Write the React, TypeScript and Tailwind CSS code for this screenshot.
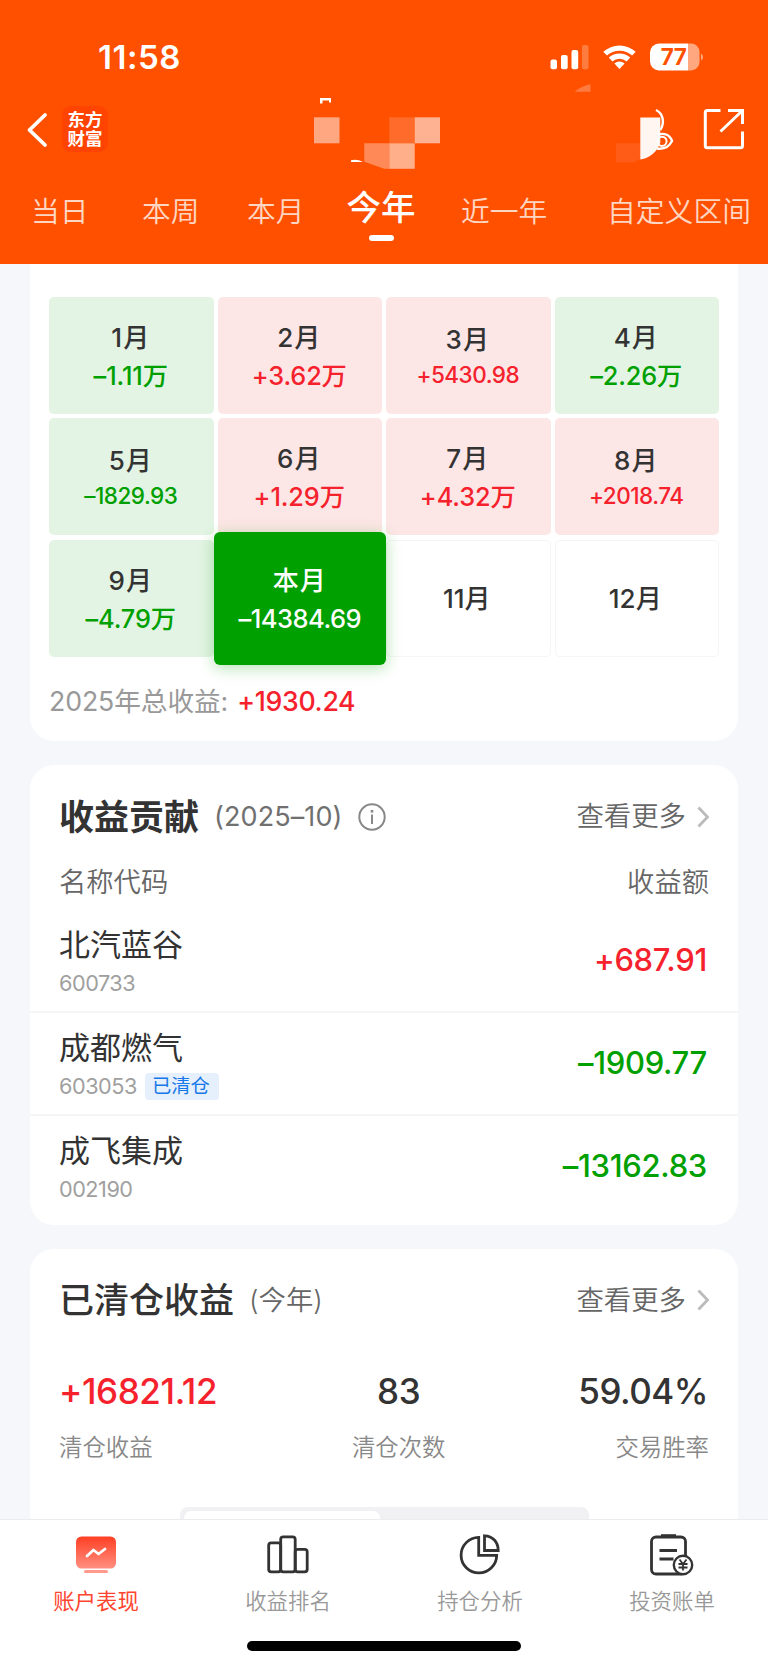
import React from 'react';

const tabs = [
  { label: '当日', className: 'ml-[31px] w-[58px]' },
  { label: '本周', className: 'ml-[53px] w-[58px]' },
  { label: '本月', className: 'ml-[47px] w-[58px]' },
  { label: '今年', className: 'ml-[41px] w-[70px]', active: true },
  { label: '近一年', className: 'ml-[45px] w-[87px]' },
  { label: '自定义区间', className: 'ml-[59px] w-[145px]' },
];

const months = [
  { name: '1月', value: '–1.11万', type: 'down' },
  { name: '2月', value: '+3.62万', type: 'up' },
  { name: '3月', value: '+5430.98', type: 'up', small: true },
  { name: '4月', value: '–2.26万', type: 'down' },
  { name: '5月', value: '–1829.93', type: 'down', small: true },
  { name: '6月', value: '+1.29万', type: 'up' },
  { name: '7月', value: '+4.32万', type: 'up' },
  { name: '8月', value: '+2018.74', type: 'up', small: true },
  { name: '9月', value: '–4.79万', type: 'down' },
  { name: '本月', value: '–14384.69', type: 'current' },
  { name: '11月', type: 'empty' },
  { name: '12月', type: 'empty' },
];

const stocks = [
  { name: '北汽蓝谷', code: '600733', value: '+687.91', up: true },
  { name: '成都燃气', code: '603053', value: '–1909.77', cleared: true },
  { name: '成飞集成', code: '002190', value: '–13162.83' },
];

const StatusBar = () => (
  <div className="h-[82px] flex pt-[41px] pl-[98px] pr-[64px] justify-between">
    <div className="h-8 text-[33px] leading-8 font-semibold tracking-[0.5px] text-white">11:58</div>
    <svg className="w-[156px] h-8" viewBox="548 41 156 32" fill="#fff">
      <rect x="550.5" y="59.5" width="6.5" height="9.8" rx="2" />
      <rect x="561" y="55" width="6.7" height="14.3" rx="2" />
      <rect x="571.5" y="50" width="6.7" height="19.3" rx="2" />
      <rect x="582" y="45" width="6.5" height="24.3" rx="2" opacity="0.25" />
      <path d="M603.3 51.8a24 24 0 0 1 32.4 0l-3.6 3.8a18.6 18.6 0 0 0-25.2 0z" />
      <path d="M608.8 57.6a16 16 0 0 1 21.4 0l-3.6 3.8a10.6 10.6 0 0 0-14.2 0z" />
      <path d="M614.4 63.4a8 8 0 0 1 10.2 0l-5.1 5.6z" />
      <path d="M659 43.5h29v27h-29a9 9 0 0 1-9-9v-9a9 9 0 0 1 9-9z" />
      <path d="M688 43.5h3a8.5 8.5 0 0 1 8.5 8.5v10a8.5 8.5 0 0 1-8.5 8.5h-3z" opacity="0.5" />
      <path d="M701 53.5a4 4 0 0 1 0 7z" opacity="0.5" />
      <text x="673.5" y="65.4" textAnchor="middle" fontSize="22.5" fontWeight="700" letterSpacing="-0.6" fill="#ff5000">77</text>
    </svg>
  </div>
);

const TitleBar = () => (
  <div className="h-[90px] flex">
    <svg className="w-[62px] h-[90px]" viewBox="0 82 62 90" fill="none" stroke="#fff" strokeWidth="3.8" strokeLinecap="round" strokeLinejoin="round">
      <path d="M45 115 29.5 130l15.500 15" />
    </svg>
    <div className="mt-6 w-[46px] h-[46px] rounded-[9px] bg-[#ff4300] text-white text-[17.5px] font-bold leading-[19px] text-center pt-1">
      东方
      <br />
      财富
    </div>
    {/* Blurred-out account name */}
    <svg className="ml-[202px] w-[135px] h-[90px]" viewBox="310 82 135 90">
      <path d="M320 98h11v4.500h-2v-2h-6.500v3h-2.500z" fill="#fff" />
      <rect x="314" y="117.3" width="25.5" height="26" fill="#ffa780" />
      <rect x="389.3" y="117.3" width="25.4" height="26" fill="#ff6b2b" />
      <rect x="414.7" y="117.3" width="25.3" height="26" fill="#ffb291" />
      <path d="M364.3 143.3h25v25.5h-5l-20-7z" fill="#ff8a57" />
      <rect x="389.3" y="143.3" width="25.4" height="25.5" fill="#ffaf8a" />
      <path d="M351 160.3q6-1.500 12 1.700h-12z" fill="#fff" />
    </svg>
    <svg className="ml-[125px] w-[178px] h-[90px]" viewBox="570 82 178 90" fill="none">
      <path d="M574.5 91.7q7-6 16-7.500v7.500z" fill="#ff7a40" />
      <path d="M616 143.3h25v15l-6 4h-19z" fill="#ff5c17" />
      <path d="M640.3 117.5h20v25c-3 9-10 15.500-20 17z" fill="#fff6f2" />
      <path d="M656 110c7 3.500 9 12 4.500 20" stroke="#fff" strokeWidth="2.4" />
      <path d="M658 134.5c7-2 12 1 14 6.500-3 6-8 8.500-15 7.500" stroke="#fff" strokeWidth="2.4" />
      <circle cx="662" cy="141.3" r="4.6" stroke="#fff" strokeWidth="2" />
      <path d="M720.5 110.5h-13.200a2 2 0 0 0-2 2v33.200a2 2 0 0 0 2 2h33.200a2 2 0 0 0 2-2V131.500M728 110.500h14.500V124M742 111l-21.500 20.500" stroke="#fff" strokeWidth="3" />
    </svg>
  </div>
);

const Tabs = () => (
  <div className="h-[92px] flex pt-5">
    {tabs.map((tab) =>
      tab.active ? (
        <div key={tab.label} className={`${tab.className} shrink-0 flex flex-col items-center`}>
          <span className="h-8 leading-8 text-[34.5px] font-medium text-white whitespace-nowrap">{tab.label}</span>
          <span className="mt-[11px] w-[25px] h-[6px] rounded-full bg-white" />
        </div>
      ) : (
        <div key={tab.label} className={`${tab.className} shrink-0 h-10 leading-10 text-[28.8px] font-[350] text-[#ffd6c2] whitespace-nowrap`}>
          {tab.label}
        </div>
      )
    )}
  </div>
);

const MonthCell = ({ month }: { month: (typeof months)[number] }) => {
  if (month.type === 'empty') {
    return (
      <div className="h-[117px] rounded-[5px] border border-[#f5f5f6] flex items-center justify-center pr-[3px] text-[26px] font-medium text-[#333]">
        <span>{month.name}</span>
      </div>
    );
  }

  if (month.type === 'current') {
    return (
      <div className="relative h-[117px]">
        <div className="absolute -inset-x-1 -inset-y-2 rounded-[6px] bg-[#00a000] text-white text-center pt-[33px] shadow-[0_3px_16px_rgba(0,160,0,0.3)]">
          <div className="h-8 leading-8 text-[26px] font-medium tracking-[1px]">{month.name}</div>
          <div className="mt-[6px] h-8 leading-8 text-[25.5px] font-medium tracking-[-0.5px]">{month.value}</div>
        </div>
      </div>
    );
  }

  const up = month.type === 'up';
  return (
    <div className={`h-[117px] rounded-[5px] pr-px text-center ${up ? 'bg-[#fde6e6]' : 'bg-[#e3f4e4]'} ${month.small ? 'pt-[27px]' : 'pt-[25px]'}`}>
      <div className="h-8 leading-8 text-[26px] font-medium tracking-[1px] text-[#333]">{month.name}</div>
      <div
        className={`h-8 leading-8 font-medium ${up ? 'text-[#f5222d]' : 'text-[#00a000]'} ${
          month.small ? 'mt-[3px] text-[22.5px] tracking-[-0.5px]' : 'mt-[6px] text-[25.3px] tracking-[-0.1px]'
        }`}
      >
        {month.value}
      </div>
    </div>
  );
};

const More = () => (
  <div className="flex items-center text-[27.4px] font-[350] text-[#666]">
    <span>查看更多</span>
    <svg className="ml-[9px] w-4 h-6" viewBox="0 0 16 24" fill="none" stroke="#bbb" strokeWidth="2.8">
      <path d="M3.5 2.5 12.5 12l-9 9.500" />
    </svg>
  </div>
);

const Contribution = () => (
  <section className="mt-6 h-[460px] rounded-[24px] bg-white">
    <div className="h-[104px] flex items-center justify-between pl-[29px] pr-[27px]">
      <div className="flex items-center">
        <h2 className="text-[35px] font-bold text-[#333]">收益贡献</h2>
        <span className="ml-[15px] text-[27px] tracking-[0.1px] text-[#707070]">(2025–10)</span>
        <svg className="ml-[15px] w-7 h-7" viewBox="0 0 28 28" fill="none" stroke="#888" strokeWidth="2">
          <circle cx="14" cy="14" r="12.7" />
          <path d="M14 11.5v9.500" />
          <path d="M14 7v2.600" strokeWidth="2.6" />
        </svg>
      </div>
      <More />
    </div>
    <div className="h-7 flex items-center justify-between px-[29px] text-[27.3px] font-[350] text-[#666]">
      <span>名称代码</span>
      <span>收益额</span>
    </div>
    {stocks.map((stock, index) => (
      <div
        key={stock.code}
        className={`flex justify-between pl-[29px] pr-[31px] ${index === 0 ? 'h-[114px] pt-8' : 'h-[103px] pt-[19px] border-t-2 border-[#f5f5f7]'}`}
      >
        <div>
          <div className="h-8 leading-8 text-[31px] text-[#333]">{stock.name}</div>
          <div className="mt-[9px] h-[27px] flex items-center">
            <span className="text-[21.7px] tracking-[-0.5px] text-[#a0a0a0]">{stock.code}</span>
            {stock.cleared && (
              <span className="ml-2 w-[74px] h-[27px] rounded-[4px] bg-[#e6f0fc] pr-[2px] text-center leading-[27px] text-[19.3px] text-[#1677e8]">
                已清仓
              </span>
            )}
          </div>
        </div>
        <div className={`mt-[15px] h-8 leading-8 text-[31px] font-medium tracking-[-0.3px] ${stock.up ? 'text-[#f5222d]' : 'text-[#00a000]'}`}>
          {stock.value}
        </div>
      </div>
    ))}
  </section>
);

const Cleared = () => (
  <section className="mt-6 h-[290px] rounded-t-[24px] bg-white">
    <div className="h-[103px] flex items-center justify-between pl-[29px] pr-[27px]">
      <div className="flex items-center">
        <h2 className="text-[35px] font-medium text-[#333]">已清仓收益</h2>
        <span className="ml-[15px] text-[27.4px] font-[350] text-[#666]">(今年)</span>
      </div>
      <More />
    </div>
    <div className="mt-[19px] flex justify-between pl-[29px] pr-[29px]">
      <div>
        <div className="h-10 leading-10 text-[35px] font-medium tracking-[-0.4px] text-[#f5222d]">+16821.12</div>
        <div className="mt-[21px] h-8 leading-8 text-[23.4px] font-[350] text-[#888]">清仓收益</div>
      </div>
      <div className="ml-[2px] text-center">
        <div className="h-10 leading-10 text-[35px] font-medium tracking-[-0.4px] text-[#333]">83</div>
        <div className="mt-[21px] h-8 leading-8 text-[23.4px] font-[350] text-[#888]">清仓次数</div>
      </div>
      <div className="text-right">
        <div className="h-10 leading-10 pr-px text-[35px] font-medium tracking-[-0.5px] text-[#333]">59.04%</div>
        <div className="mt-[21px] h-8 leading-8 text-[23.4px] font-[350] text-[#888]">交易胜率</div>
      </div>
    </div>
    {/* Segment switch, continues under the bottom bar */}
    <div className="mt-[43px] ml-[150px] w-[409px] h-8 rounded-[8px] bg-[#f1f1f3] pt-1 pl-1">
      <div className="w-[196px] h-7 rounded-[7px] bg-white" />
    </div>
  </section>
);

const icons = [
  <svg key="account" className="w-12 h-12" viewBox="72 1530 48 48">
    <defs>
      <linearGradient id="screen" x1="0" y1="0" x2="0" y2="1">
        <stop offset="0" stopColor="#ff3f24" />
        <stop offset="1" stopColor="#ff8f80" />
      </linearGradient>
    </defs>
    <rect x="76" y="1536.5" width="40" height="32" rx="5.5" fill="url(#screen)" />
    <rect x="84" y="1570" width="24" height="3" rx="1.5" fill="#ff9a8c" />
    <path d="M87 1556l6.500-6 5 4 6.500-5" fill="none" stroke="#fff" strokeWidth="2.8" strokeLinecap="round" strokeLinejoin="round" />
  </svg>,
  <svg key="rank" className="w-12 h-12" viewBox="264 1530 48 48" fill="none" stroke="#333" strokeWidth="2.8">
    <rect x="268.7" y="1542.8" width="12" height="29" rx="2.5" />
    <rect x="280.7" y="1536.8" width="14.5" height="35" rx="2.5" />
    <rect x="295.2" y="1549.3" width="12" height="22.5" rx="2.5" />
  </svg>,
  <svg key="pie" className="w-12 h-12" viewBox="456 1530 48 48" fill="none" stroke="#333" strokeWidth="2.8">
    <path d="M478.7 1537.3a17.800 17.800 0 1 0 18 18h-18z" />
    <path d="M484.5 1535.8v14.700h13.700c0-8.500-5.500-14.500-13.700-14.700z" />
  </svg>,
  <svg key="bill" className="w-12 h-12" viewBox="648 1530 48 48" fill="none" stroke="#333" strokeWidth="2.8">
    <path d="M685.5 1556v-14.500a4.500 4.500 0 0 0-4.500-4.500h-25a4.500 4.500 0 0 0-4.500 4.500v28a4.500 4.500 0 0 0 4.500 4.500h26" />
    <path d="M661 1536h15" strokeWidth="3.6" />
    <path d="M659.5 1550.5h17.500M659.500 1559h14" />
    <circle cx="683" cy="1565" r="9.2" fill="#fff" strokeWidth="2.4" />
    <path d="M679.5 1559.5l3.500 4.500 3.500-4.500M683 1564v6.500M678.500 1564h9M678.500 1567.500h9" strokeWidth="1.8" />
  </svg>,
];

const navLabels = ['账户表现', '收益排名', '持仓分析', '投资账单'];

const BottomNav = () => (
  <nav className="absolute inset-x-0 bottom-0 h-[148px] bg-white border-t border-[#ececee]">
    <div className="flex pt-[10px]">
      {navLabels.map((label, index) => (
        <div key={label} className="w-48 flex flex-col items-center">
          {icons[index]}
          <span className={`mt-[7px] h-8 leading-8 text-[21.4px] ${index === 0 ? 'text-[#ff4530]' : 'font-[350] text-[#999]'}`}>{label}</span>
        </div>
      ))}
    </div>
    <div className="mx-auto mt-6 w-[274px] h-[10px] rounded-full bg-black" />
  </nav>
);

const App = () => {
  return (
    <div className="relative w-[768px] h-[1667px] overflow-hidden bg-[#f6f7fa] font-['Inter','Noto_Sans_CJK_SC',sans-serif]">
      <header className="h-[264px] bg-[#ff5000]">
        <StatusBar />
        <TitleBar />
        <Tabs />
      </header>

      <main className="px-[30px]">
        {/* Monthly calendar */}
        <section className="h-[477px] rounded-b-[24px] bg-white px-[19px] pt-[33px]">
          <div className="grid grid-cols-4 gap-x-1 gap-y-[4.3px]">
            {months.map((month) => (
              <MonthCell key={month.name} month={month} />
            ))}
          </div>
          <div className="mt-7 h-8 flex items-center text-[26.7px]">
            <span className="tracking-[-0.1px] text-[#999]">2025年总收益:</span>
            <span className="ml-[9px] font-medium tracking-[-0.3px] text-[#f5222d]">+1930.24</span>
          </div>
        </section>

        <Contribution />
        <Cleared />
      </main>

      <BottomNav />
    </div>
  );
};

export default App;
